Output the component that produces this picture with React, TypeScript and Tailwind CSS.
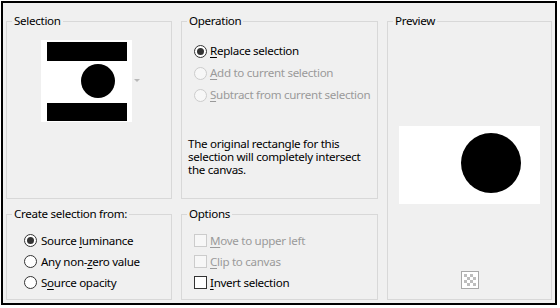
import React from "react";

function Radio({ checked, disabled }: { checked?: boolean; disabled?: boolean }) {
  return (
    <span
      className={`flex h-[13px] w-[13px] shrink-0 items-center justify-center rounded-full border ${
        disabled ? "border-[#cccccc] bg-[#f7f7f7]" : "border-[#333333] bg-white"
      }`}
    >
      {checked && <span className="h-[7px] w-[7px] rounded-full bg-[#333333]" />}
    </span>
  );
}

function Check({ disabled }: { disabled?: boolean }) {
  return (
    <span
      className={`h-[13px] w-[13px] shrink-0 border ${
        disabled ? "border-[#cccccc] bg-[#f7f7f7]" : "border-[#333333] bg-white"
      }`}
    />
  );
}

function Label({ pre, u, post, disabled }: { pre?: string; u: string; post: string; disabled?: boolean }) {
  return (
    <span className={`whitespace-nowrap ${disabled ? "text-[#9a9a9a]" : "text-black"}`}>
      {pre}
      <u className="underline-offset-[2px]">{u}</u>
      {post}
    </span>
  );
}

function Group({ title, className, children }: { title: string; className: string; children?: React.ReactNode }) {
  return (
    <fieldset className={`border border-[#d8d8d8] ${className}`}>
      <legend className="ml-[5px] px-[2px] leading-[16px] text-black">{title}</legend>
      {children}
    </fieldset>
  );
}

export default function App() {
  return (
    <div className="h-[308px] w-[560px] bg-white pl-px pt-px font-['Noto_Sans',sans-serif] text-[11.6px] tracking-[-0.3px]">
      <div className="flex h-[304px] w-[556px] gap-[9px] border-2 border-black bg-[#f0f0f0] pl-[3px] pt-[10px]">
        <div className="flex w-[166px] flex-col gap-[7px]">
          <Group title="Selection" className="h-[186px]">
            <div className="ml-[34px] mt-[11px] flex items-center">
              <svg width="91" height="82" viewBox="0 0 91 82">
                <rect width="91" height="82" fill="#fff" />
                <rect x="6" y="2" width="80" height="19" fill="#000" />
                <circle cx="57" cy="41" r="17" fill="#000" />
                <rect x="6" y="63" width="80" height="18" fill="#000" />
              </svg>
              <svg width="6" height="4" viewBox="0 0 6 4" className="ml-[2px]">
                <path d="M0 0 L6 0 L3 3 Z" fill="#b8b8b8" />
              </svg>
            </div>
          </Group>
          <Group title="Create selection from:" className="h-[94px]">
            <div className="mt-[8px] flex flex-col pl-[17px]">
              <div className="flex h-[21px] items-center gap-[4px]">
                <Radio checked />
                <Label pre="Source " u="l" post="uminance" />
              </div>
              <div className="flex h-[21px] items-center gap-[4px]">
                <Radio />
                <Label pre="Any non-" u="z" post="ero value" />
              </div>
              <div className="flex h-[21px] items-center gap-[4px]">
                <Radio />
                <Label pre="S" u="o" post="urce opacity" />
              </div>
            </div>
          </Group>
        </div>

        <div className="flex w-[197px] flex-col gap-[7px]">
          <Group title="Operation" className="h-[186px]">
            <div className="mt-[11px] flex flex-col pl-[12px]">
              <div className="flex h-[22px] items-center gap-[3px]">
                <Radio checked />
                <Label u="R" post="eplace selection" />
              </div>
              <div className="flex h-[22px] items-center gap-[3px]">
                <Radio disabled />
                <Label u="A" post="dd to current selection" disabled />
              </div>
              <div className="flex h-[22px] items-center gap-[3px]">
                <Radio disabled />
                <Label u="S" post="ubtract from current selection" disabled />
              </div>
            </div>
            <p className="mt-[31px] whitespace-nowrap pl-[6px] leading-[13px] text-black">
              The original rectangle for this
              <br />
              selection will completely intersect
              <br />
              the canvas.
            </p>
          </Group>
          <Group title="Options" className="h-[94px]">
            <div className="mt-[8px] flex flex-col pl-[12px]">
              <div className="flex h-[21px] items-center gap-[3px]">
                <Check disabled />
                <Label u="M" post="ove to upper left" disabled />
              </div>
              <div className="flex h-[21px] items-center gap-[3px]">
                <Check disabled />
                <Label u="C" post="lip to canvas" disabled />
              </div>
              <div className="flex h-[21px] items-center gap-[3px]">
                <Check />
                <Label u="I" post="nvert selection" />
              </div>
            </div>
          </Group>
        </div>

        <Group title="Preview" className="h-[287px] w-[165px]">
          <div className="flex flex-col items-center">
            <svg width="141" height="78" viewBox="0 0 141 78" className="mt-[97px]">
              <rect width="141" height="78" fill="#fff" />
              <circle cx="92" cy="37" r="30" fill="#000" />
            </svg>
            <svg width="18" height="18" viewBox="0 0 18 18" className="mt-[67px]">
              <rect x="0.5" y="0.5" width="17" height="17" fill="#fff" stroke="#a8a8a8" />
              <rect x="3" y="3" width="3" height="3" fill="#bdbdbd" />
              <rect x="9" y="3" width="3" height="3" fill="#bdbdbd" />
              <rect x="6" y="6" width="3" height="3" fill="#bdbdbd" />
              <rect x="12" y="6" width="3" height="3" fill="#bdbdbd" />
              <rect x="3" y="9" width="3" height="3" fill="#bdbdbd" />
              <rect x="9" y="9" width="3" height="3" fill="#bdbdbd" />
              <rect x="6" y="12" width="3" height="3" fill="#bdbdbd" />
              <rect x="12" y="12" width="3" height="3" fill="#bdbdbd" />
            </svg>
          </div>
        </Group>
      </div>
    </div>
  );
}
